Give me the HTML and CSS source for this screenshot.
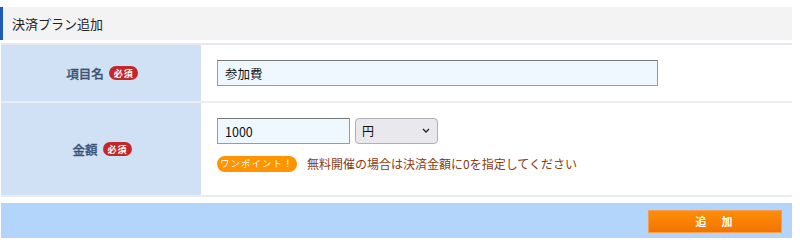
FILE: index.html
```html
<!DOCTYPE html>
<html lang="ja">
<head>
<meta charset="utf-8">
<title>決済プラン追加</title>
<link rel="stylesheet" href="styles.css">
</head>
<body>
<div class="page">
  <div class="head">決済プラン追加</div>
  <div class="form">
    <div class="row row1">
      <div class="label"><span class="ltext">項目名</span><span class="req">必須</span></div>
      <div class="value">
        <input class="text wide" type="text" value="参加費">
      </div>
    </div>
    <div class="row row2">
      <div class="label"><span class="ltext">金額</span><span class="req">必須</span></div>
      <div class="value">
        <div class="inline">
          <input class="text short" type="text" value="1000">
          <select class="sel"><option>円</option></select>
        </div>
        <div class="hint"><span class="point">ワンポイント！</span><span class="msg">無料開催の場合は決済金額に0を指定してください</span></div>
      </div>
    </div>
  </div>
  <div class="foot">
    <button class="btn" type="button">追　加</button>
  </div>
</div>
</body>
</html>
```
FILE: styles.css
```css
html, body {
  margin: 0;
  padding: 0;
  background: #ffffff;
}
body {
  font-family: "Noto Sans CJK JP", "Noto Sans", sans-serif;
  font-size: 13px;
  color: #222;
}
.page {
  width: 792px;
  padding-top: 7px;
}
.head {
  height: 33px;
  box-sizing: border-box;
  background: #f3f3f3;
  border-left: 3px solid #1e5cb3;
  padding-left: 9px;
  display: flex;
  align-items: center;
  font-size: 13px;
  color: #222;
  margin-bottom: 3px;
}
.form {
  border-top: 2px solid #e7e7ef;
  margin-left: 1px;
}
.row {
  display: grid;
  grid-template-columns: 200px 1fr;
  border-bottom: 2px solid #ebebf0;
}
.row1 { height: 56px; }
.row2 { height: 92px; }
.label {
  background: #d0e1f5;
  display: flex;
  align-items: center;
  justify-content: center;
  gap: 5px;
  padding-left: 2px;
}
.ltext {
  color: #3b5375;
  font-size: 12.5px;
  font-weight: 500;
  -webkit-text-stroke: 0.3px #3b5375;
}
.req {
  display: inline-flex;
  align-items: center;
  justify-content: center;
  width: 29px;
  height: 14px;
  border-radius: 7px;
  background: #c4262a;
  color: #fff;
  font-size: 9px;
  font-weight: bold;
  letter-spacing: 1px;
  padding-left: 1px;
  box-sizing: border-box;
}
.value {
  background: #fff;
  padding: 15px 0 0 16px;
  box-sizing: border-box;
}
.text {
  box-sizing: border-box;
  height: 26px;
  border: 1px solid #9a9a9a;
  border-top-color: #777;
  background: #f0f8ff;
  font-family: "Noto Sans CJK JP", sans-serif;
  font-size: 12.5px;
  color: #111;
  padding: 0 7px;
  margin: 0;
  outline: none;
}
.wide { width: 441px; }
.short { width: 133px; }
.inline {
  display: flex;
  align-items: center;
  gap: 5px;
}
.sel {
  -webkit-appearance: none;
  appearance: none;
  box-sizing: border-box;
  width: 83px;
  height: 26px;
  margin: -1px 0 0 0;
  border: 1px solid #b0b0b4;
  border-radius: 4px;
  background-color: #e9e9ed;
  background-image: url("data:image/svg+xml;utf8,<svg xmlns='http://www.w3.org/2000/svg' width='8' height='5' viewBox='0 0 8 5'><path d='M1 1 L4 4 L7 1' fill='none' stroke='%23222' stroke-width='1.3'/></svg>");
  background-repeat: no-repeat;
  background-position: right 7px center;
  font-family: "Noto Sans CJK JP", sans-serif;
  font-size: 12px;
  color: #111;
  padding: 0 6px;
}
.hint {
  display: flex;
  align-items: center;
  gap: 10px;
  margin-top: 11px;
}
.point {
  display: inline-flex;
  align-items: center;
  justify-content: center;
  width: 80px;
  height: 16px;
  border-radius: 8px;
  background: #ff9400;
  color: #fff;
  font-size: 9px;
  letter-spacing: 1.5px;
}
.msg {
  color: #8a3a10;
  font-size: 12px;
}
.foot {
  margin-top: 6px;
  margin-left: 1px;
  height: 35px;
  background: #b3d4fb;
  display: flex;
  align-items: center;
  justify-content: flex-end;
  padding-right: 10px;
}
.btn {
  width: 134px;
  height: 23px;
  margin-top: 1px;
  border: 1px solid #f3a050;
  background: linear-gradient(#ff8d08, #f27400);
  color: #fff;
  font-family: "Noto Sans CJK JP", sans-serif;
  font-size: 11px;
  font-weight: bold;
  letter-spacing: 2px;
  padding: 0;
}
```
